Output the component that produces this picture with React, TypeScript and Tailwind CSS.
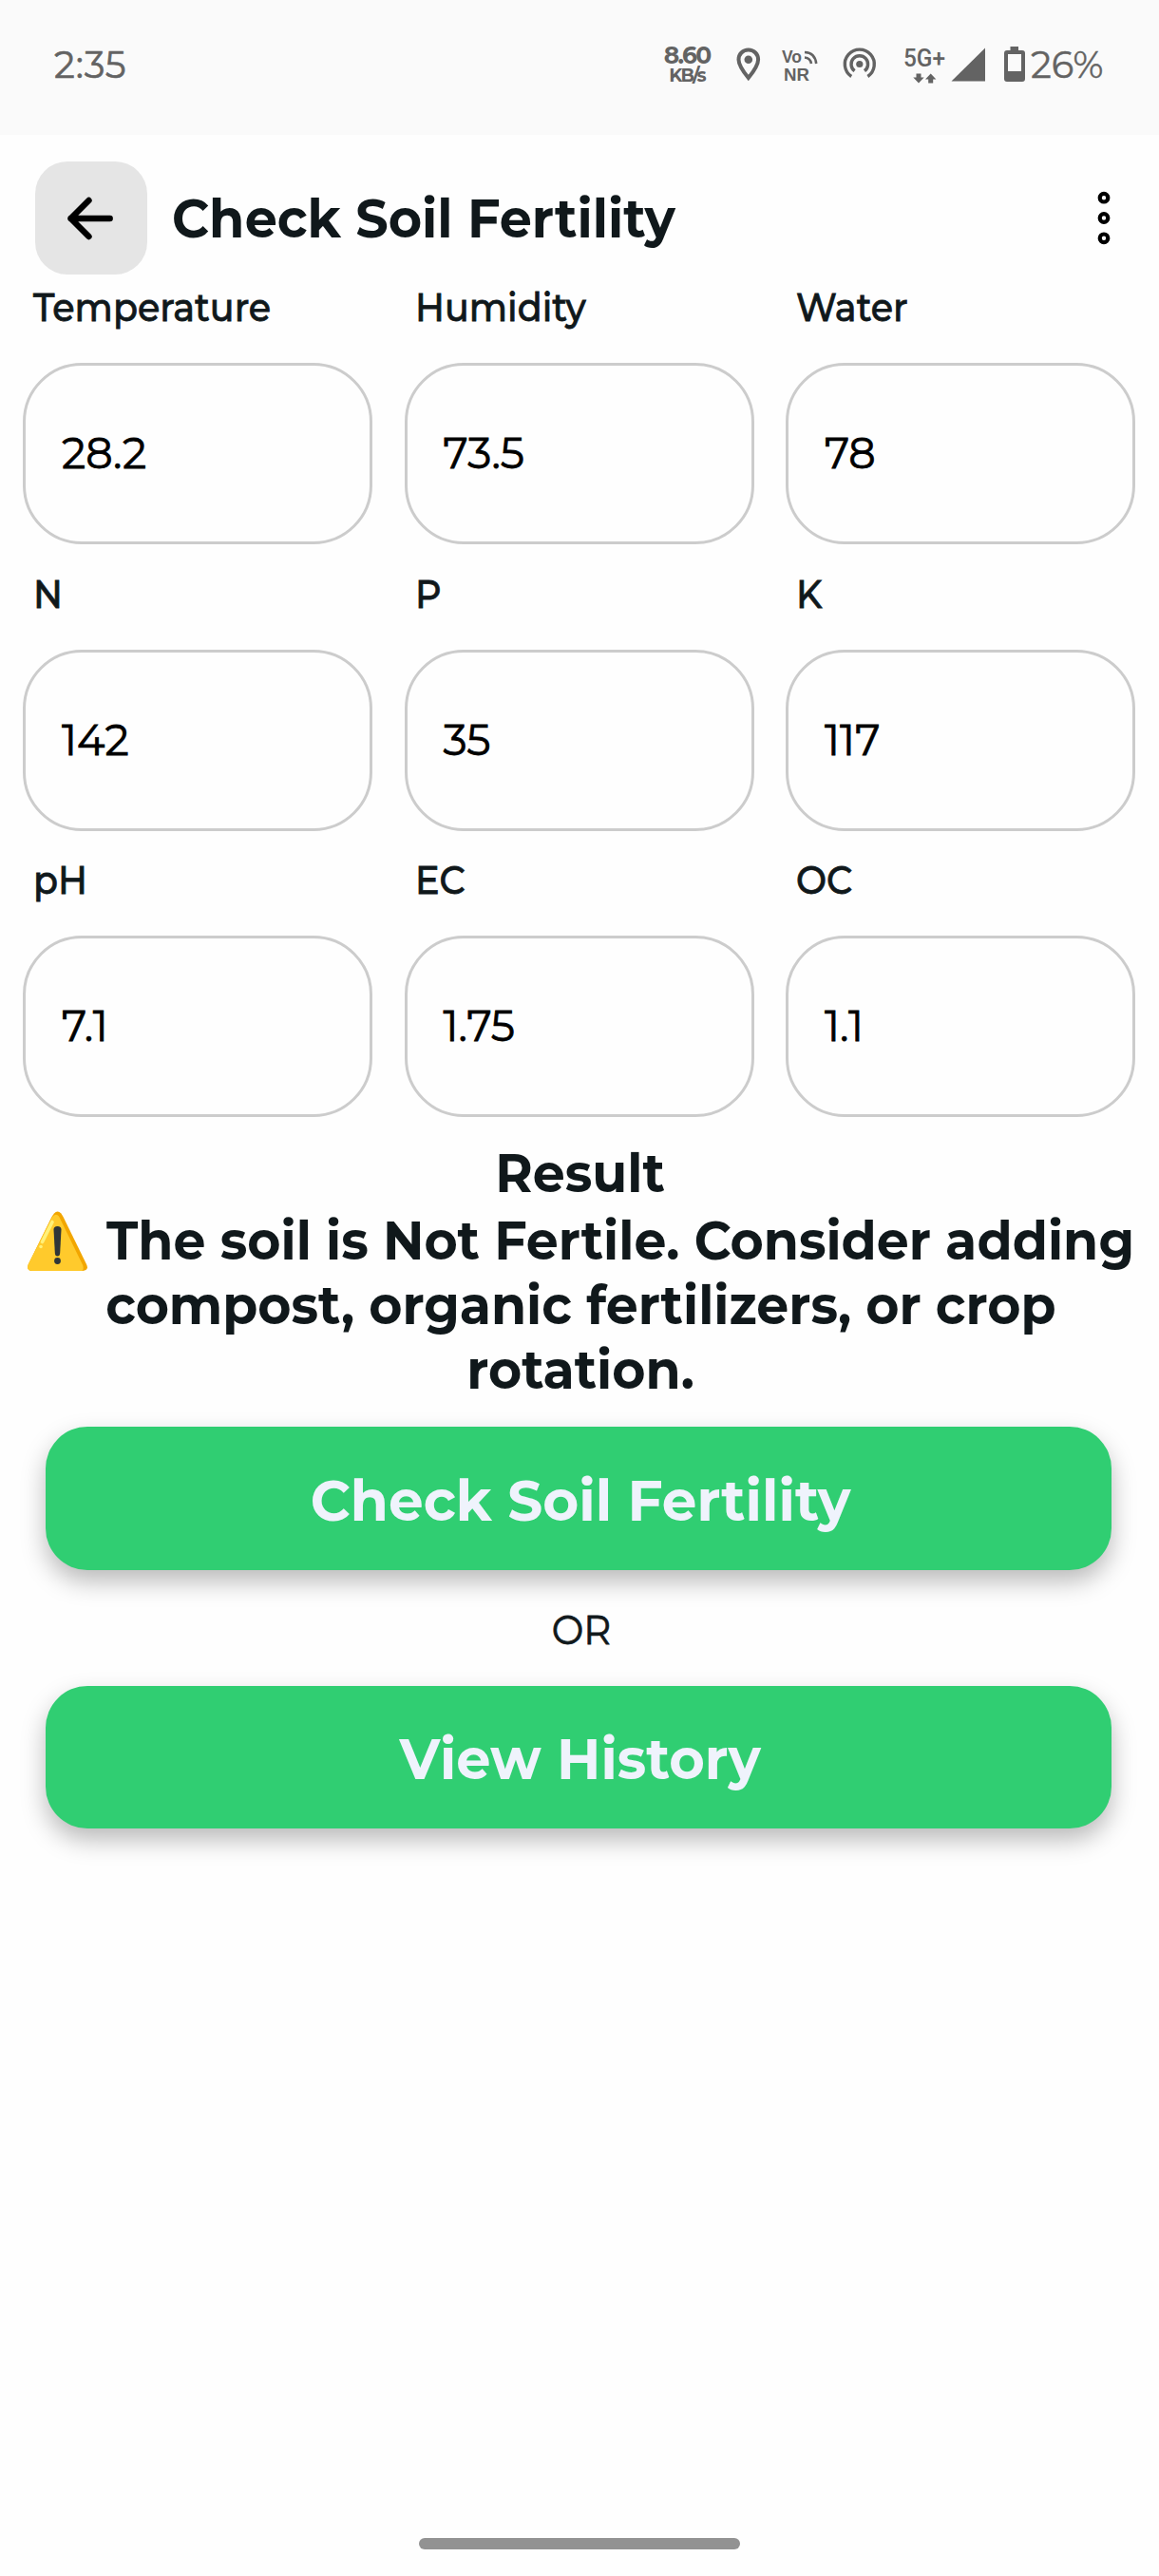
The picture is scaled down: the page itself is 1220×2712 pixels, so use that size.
import type { ReactNode } from "react";

const readings = [
  { label: "Temperature", value: "28.2" },
  { label: "Humidity", value: "73.5" },
  { label: "Water", value: "78" },
  { label: "N", value: "142" },
  { label: "P", value: "35" },
  { label: "K", value: "117" },
  { label: "pH", value: "7.1" },
  { label: "EC", value: "1.75" },
  { label: "OC", value: "1.1" },
];

function StatusBar() {
  return (
    <div className="flex h-[142px] shrink-0 items-start bg-[#fafafa] pt-[45px] text-[#636363]">
      <span className="ml-[57px] text-[38.5px] leading-[48px] tracking-[0.8px] [-webkit-text-stroke:0.6px_currentColor]">2:35</span>
      <div className="ml-auto flex h-[48px] w-[60px] flex-col items-center pt-[2px] text-center">
        <span className="text-[25px] leading-[23px] font-bold tracking-[-1.8px]">8.60</span>
        <span className="text-[19px] leading-[20px] font-bold tracking-[-1.9px]">KB/s</span>
      </div>
      {/* location */}
      <svg viewBox="765 45 45 48" className="ml-[12px] h-[48px] w-[45px]">
        <path d="M787.8 52.5c-6 0-10.3 4.6-10.3 10.2 0 6.600 10.3 19.400 10.300 19.400s10.300-12.800 10.300-19.400c0-5.600-4.300-10.200-10.300-10.200Z" fill="none" stroke="currentColor" strokeWidth="4" />
        <circle cx="787.800" cy="62.800" r="4.300" fill="currentColor" />
      </svg>
      {/* voice over new radio */}
      <svg viewBox="818 45 50 48" className="ml-[8px] h-[48px] w-[50px]">
        <g fill="currentColor" className="font-['Liberation_Sans'] font-bold">
          <text x="823" y="65.500" fontSize="18" textLength="21" lengthAdjust="spacingAndGlyphs">Vo</text>
          <text x="825" y="84.500" fontSize="18.500" textLength="27" lengthAdjust="spacingAndGlyphs">NR</text>
        </g>
        <g fill="none" stroke="currentColor" strokeWidth="2.600">
          <path d="M847 60.500q6 .5 7 6.500" />
          <path d="M847 55q11 .5 12.200 12" />
        </g>
      </svg>
      {/* hotspot */}
      <svg viewBox="880 45 50 48" className="ml-[12px] h-[48px] w-[50px]">
        <g fill="none" stroke="currentColor" strokeWidth="3.400">
          <path d="M896.200 80.500A15.500 15.500 0 1 1 913.400 80.500" />
          <path d="M899.600 74.700A8.800 8.800 0 1 1 910 74.700" />
        </g>
        <circle cx="904.800" cy="67.500" r="3.600" fill="currentColor" />
      </svg>
      {/* mobile network */}
      <svg viewBox="945 45 100 48" className="ml-[15px] h-[48px] w-[100px]">
        <text x="951" y="69.500" fontSize="26" textLength="44" lengthAdjust="spacingAndGlyphs" fill="currentColor" className="font-['Roboto'] font-medium">5G+</text>
        <path d="M964.500 77.500h5v4h3.200l-5.700 6-5.700-6h3.200z" fill="currentColor" />
        <path d="M977.200 87.500h5v-4h3.200l-5.700-6-5.700 6h3.200z" fill="currentColor" />
        <path d="M1037 50.500V85.500H1001.500Z" fill="currentColor" />
      </svg>
      {/* battery */}
      <svg viewBox="1052 45 32 48" className="ml-[7px] h-[48px] w-[32px]">
        <path fillRule="evenodd" d="M1063.500 49h8.500v4h4a3 3 0 0 1 3 3v27a3 3 0 0 1-3 3h-16a3 3 0 0 1-3-3v-27a3 3 0 0 1 3-3h3.500zM1061 57v18h14v-18z" fill="currentColor" />
      </svg>
      <span className="ml-px w-[135px] text-[38.5px] leading-[48px] [-webkit-text-stroke:0.4px_currentColor]">26%</span>
    </div>
  );
}

function Header() {
  return (
    <div className="mt-[28px] flex h-[119px] items-center pl-[37px]">
      <button className="flex h-[119px] w-[118px] items-center justify-center rounded-[34px] bg-[#e5e5e5]">
        <svg viewBox="66 199 60 60" className="size-[60px]" fill="none" stroke="#000" strokeWidth="6.400" strokeLinecap="round" strokeLinejoin="round">
          <path d="M115.700 229H74.500M93.500 210l-19 19 19 19" />
        </svg>
      </button>
      <h1 className="ml-[26px] origin-left scale-x-[0.948] text-[57px] leading-[68px] font-bold whitespace-nowrap">
        Check Soil Fertility
      </h1>
      <svg viewBox="1150 199.500 24 60" className="mr-[46px] ml-auto h-[60px] w-[24px]" fill="none" stroke="#000" strokeWidth="4.200">
        <circle cx="1162" cy="207.700" r="4.300" />
        <circle cx="1162" cy="229" r="4.300" />
        <circle cx="1162" cy="250.300" r="4.300" />
      </svg>
    </div>
  );
}

function WarningIcon() {
  return (
    <svg viewBox="0 0 63 63" className="h-[63px] w-[63px] shrink-0">
      <path d="M28 2.500Q31.500-1.500 35.300 2.500Q36.500 4 37.500 6L62 56Q65 62.500 58 63H5Q-1.800 62.500.8 56L25.500 6Q26.700 4 28 2.500Z" fill="#f2a600" />
      <path d="M28 4.500Q30.500 2.500 33 5.500L58.200 57Q59.500 61.500 57.500 63H5Q-1.800 62.500.8 56L25.500 7Q26.700 5.300 28 4.500Z" fill="#ffca2c" />
      <path d="M26 11.500L15.500 32.500" stroke="#fff17a" strokeWidth="3.600" strokeLinecap="round" />
      <circle cx="14" cy="37.500" r="1.800" fill="#fff17a" />
      <path d="M27.500 19.500Q27.500 16 31.500 16T35.500 19.500L34.200 44Q34 47.500 31.500 47.500T28.800 44Z" fill="#2f3538" />
      <circle cx="31.500" cy="52.500" r="3.400" fill="#2f3538" />
    </svg>
  );
}

function ActionButton({ children }: { children: ReactNode }) {
  return (
    <button className="flex h-[150.500px] w-[1122px] items-center justify-center rounded-[44px] bg-[#30ce72] pt-[5px] pl-[4px] text-[60px] leading-[70px] font-bold text-[#eff3fc] shadow-[0_12px_26px_rgba(0,0,0,0.27)]">
      {children}
    </button>
  );
}

export default function App() {
  return (
    <div className="flex h-[2712px] w-[1220px] flex-col overflow-hidden bg-[#fefefe] font-['Montserrat','Inter',sans-serif] text-[#10181b]">
      <StatusBar />
      <Header />
      <div className="mt-[10px] ml-[24px] grid grid-cols-[368px_368px_368px] gap-x-[33.5px] gap-y-[27.5px]">
        {readings.map((r) => (
          <div key={r.label}>
            <div className="ml-[11px] origin-left scale-x-[0.93] text-[41px] leading-[48px] font-medium [-webkit-text-stroke:0.8px_currentColor]">
              {r.label}
            </div>
            <div className="mt-[35px] flex h-[191px] items-center rounded-[62px] border-[3px] border-[#ccc] pl-[38px] text-[44.5px] text-black [-webkit-text-stroke:0.8px_currentColor]">
              {r.value}
            </div>
          </div>
        ))}
      </div>
      <div className="mt-[25px] flex flex-col items-center pl-[2px] text-[57px] leading-[68px] font-bold whitespace-nowrap">
        <div className="scale-x-[0.944]">Result</div>
        <div className="mt-[3px] flex items-center self-start pl-[27px]">
          <WarningIcon />
          <span className="ml-[20px] origin-left scale-x-[0.943]">The soil is Not Fertile. Consider adding</span>
        </div>
        <div className="scale-x-[0.943]">compost, organic fertilizers, or crop</div>
        <div className="scale-x-[0.943]">rotation.</div>
      </div>
      <div className="mt-[26px] flex flex-col pl-[48px]">
        <ActionButton>
          <span className="scale-x-[0.967]">Check Soil Fertility</span>
        </ActionButton>
        <div className="flex h-[122px] w-[1128px] items-center justify-center pt-[4px] text-[43.500px] leading-[50px] [-webkit-text-stroke:0.8px_currentColor]">
          <span className="origin-center scale-x-[0.92]">OR</span>
        </div>
        <ActionButton>
          <span className="scale-x-[0.957]">View History</span>
        </ActionButton>
      </div>
      <div className="mx-auto mt-auto mb-[28px] h-[12px] w-[338px] rounded-full bg-[#929292]" />
    </div>
  );
}
